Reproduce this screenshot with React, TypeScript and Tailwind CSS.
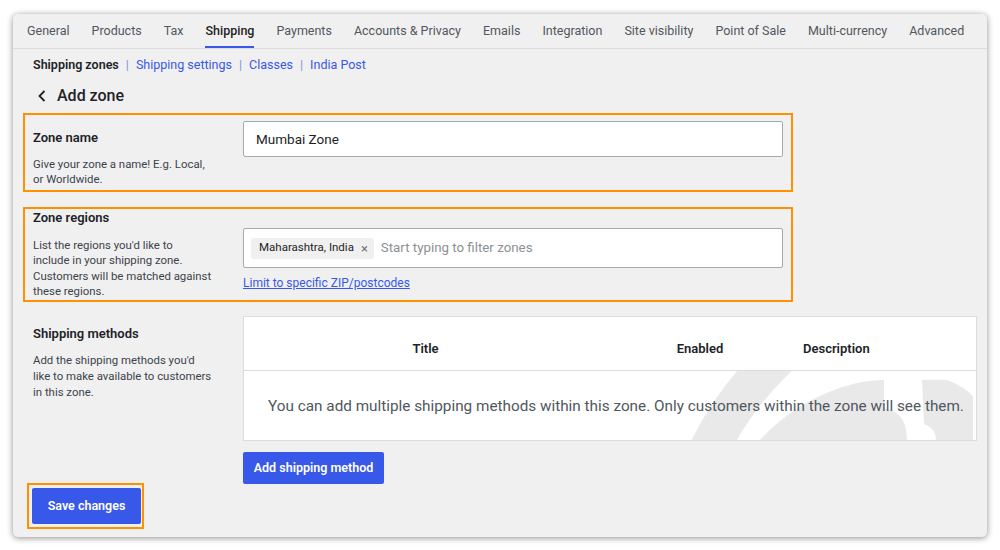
import React from "react";

const tabs = [
  "General",
  "Products",
  "Tax",
  "Shipping",
  "Payments",
  "Accounts & Privacy",
  "Emails",
  "Integration",
  "Site visibility",
  "Point of Sale",
  "Multi-currency",
  "Advanced",
];

const subLinks = ["Shipping settings", "Classes", "India Post"];

function Watermark() {
  // faint truck-wheel illustration behind the empty table row
  return (
    <svg
      className="absolute inset-0 h-full w-full"
      viewBox="0 0 732 70"
      preserveAspectRatio="none"
      fill="#e9e9ea"
    >
      <circle cx="770" cy="230" r="340" fill="none" stroke="#e9e9ea" strokeWidth="40" />
      <path d="M516 70 C545 38 585 16 626 10 L640 9 L640 38 C656 40 663 52 663 70 Z" />
      <path d="M678 9 L702 9 C716 14 724 20 729 26 L729 70 L692 70 C692 60 686 56 680 54 Z" />
    </svg>
  );
}

export default function App() {
  return (
    <div className="min-h-screen bg-white pl-[13px] pt-[14px] font-['Roboto',sans-serif]">
      <div className="w-[974px] h-[523px] rounded-[5px] bg-[#f0f0f1] shadow-[0_1px_6px_rgba(0,0,0,0.45)] overflow-hidden">
        {/* tabs */}
        <nav className="flex h-[35px] items-stretch gap-[22px] whitespace-nowrap border-b border-[#dcdcde] pl-[14px]">
          {tabs.map((t) => (
            <div
              key={t}
              className={`flex items-center text-[12.5px] ${
                t === "Shipping"
                  ? "border-b-2 border-[#3858e9] pt-[2px] font-medium text-[#1e1e1e]"
                  : "text-[#50575e]"
              }`}
            >
              {t}
            </div>
          ))}
        </nav>

        <div className="pl-[10px]">
          {/* sub nav */}
          <div className="flex items-center whitespace-nowrap pl-[10px] pt-[8px] text-[12.5px] leading-[16px]">
            <span className="font-semibold text-[#1d2327]">Shipping zones</span>
            {subLinks.map((l) => (
              <span key={l} className="flex items-center">
                <span className="px-[7px] text-[#7f96e0]">|</span>
                <span className="text-[#3858e9]">{l}</span>
              </span>
            ))}
          </div>

          {/* heading */}
          <div className="flex items-center gap-[10px] pl-[14px] pt-[13px] text-[#1d2327]">
            <svg width="10" height="14" viewBox="0 0 10 14" fill="none">
              <path d="M7.5 2 L2.5 7 L7.5 12" stroke="#1d2327" strokeWidth="1.8" />
            </svg>
            <span className="text-[16px] font-medium leading-[20px]">Add zone</span>
          </div>

          {/* zone name */}
          <div className="mt-[7px] flex w-[770px] border-2 border-[#ff9000] px-[8px]">
            <div className="w-[210px] pt-[14px] pb-[3px]">
              <div className="text-[13px] font-semibold leading-[18px] text-[#1d2327]">Zone name</div>
              <p className="mt-[10px] text-[11.4px] leading-[15px] text-[#3c434a]">
                Give your zone a name! E.g. Local,
                <br />
                or Worldwide.
              </p>
            </div>
            <div className="pt-[6px]">
              <div className="flex h-[36px] w-[540px] items-center rounded-[2px] border border-[#a7aaad] bg-white px-[12px] text-[13.5px] text-[#1e1e1e]">
                Mumbai Zone
              </div>
            </div>
          </div>

          {/* zone regions */}
          <div className="mt-[15px] flex w-[770px] border-2 border-[#ff9000] px-[8px]">
            <div className="w-[210px] pt-[2px] pb-[1px]">
              <div className="text-[13px] font-semibold leading-[14px] text-[#1d2327]">Zone regions</div>
              <p className="mt-[13px] text-[11.4px] leading-[15.3px] text-[#3c434a]">
                List the regions you'd like to
                <br />
                include in your shipping zone.
                <br />
                Customers will be matched against
                <br />
                these regions.
              </p>
            </div>
            <div className="pt-[19px]">
              <div className="flex h-[40px] w-[540px] items-center gap-[7px] rounded-[2px] border border-[#a7aaad] bg-white px-[7px]">
                <span className="flex h-[21px] items-center gap-[7px] rounded-[2px] bg-[#f0f0f0] pl-[8px] pr-[6px] text-[11.5px] text-[#1e1e1e]">
                  Maharashtra, India
                  <span className="text-[13px] leading-none text-[#757575]">×</span>
                </span>
                <span className="text-[13.3px] text-[#8c8f94]">Start typing to filter zones</span>
              </div>
              <div className="pt-[7px] text-[12px] leading-[16px] text-[#3858e9] underline">
                Limit to specific ZIP/postcodes
              </div>
            </div>
          </div>

          {/* shipping methods */}
          <div className="mt-[14px] flex pl-[10px]">
            <div className="w-[210px] pt-[9px]">
              <div className="text-[13px] font-semibold leading-[18px] text-[#1d2327]">Shipping methods</div>
              <p className="mt-[9px] text-[11.4px] leading-[16px] text-[#3c434a]">
                Add the shipping methods you'd
                <br />
                like to make available to customers
                <br />
                in this zone.
              </p>
            </div>
            <div>
              <div className="w-[734px] border border-[#dcdcde] bg-white">
                <div className="flex h-[54px] items-center border-b border-[#dcdcde] pt-[10px] text-[13px] font-semibold text-[#1d2327]">
                  <div className="w-[363px] text-center">Title</div>
                  <div className="w-[186px] text-center">Enabled</div>
                  <div className="pl-[10px]">Description</div>
                </div>
                <div className="relative flex h-[69px] items-center justify-center overflow-hidden pt-[2px]">
                  <Watermark />
                  <span className="relative whitespace-nowrap pl-[12px] text-[15.3px] text-[#50575e]">
                    You can add multiple shipping methods within this zone. Only customers within the zone will see them.
                  </span>
                </div>
              </div>
              <button className="mt-[11px] h-[32px] w-[141px] rounded-[2px] bg-[#3858e9] text-[12.5px] font-semibold text-white">
                Add shipping method
              </button>
            </div>
          </div>

          {/* save */}
          <div className="-mt-px ml-[4px] w-[117px] border-2 border-[#ff9000] p-[3px]">
            <button className="h-[36px] w-[109px] rounded-[2px] bg-[#3858e9] text-[12.5px] font-semibold text-white">
              Save changes
            </button>
          </div>
        </div>
      </div>
    </div>
  );
}
